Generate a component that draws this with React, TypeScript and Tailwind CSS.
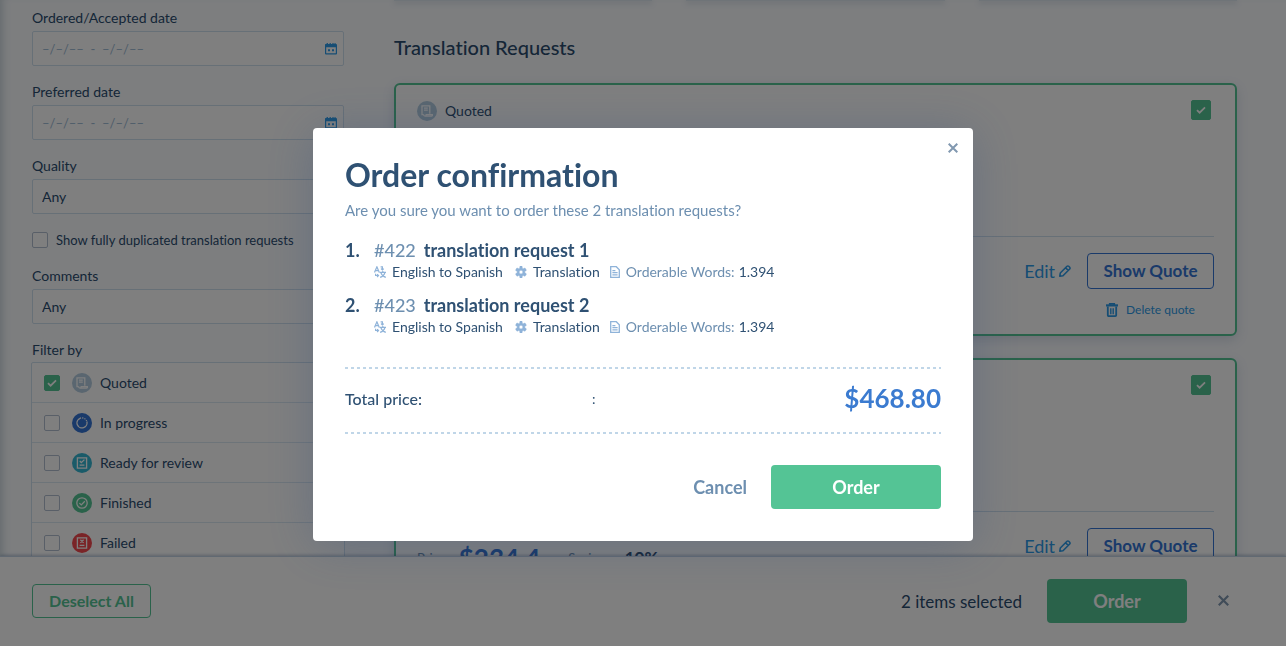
import { useState } from "react";
import type { ReactNode } from "react";

type IconProps = { className?: string };

const CheckIcon = ({ className }: IconProps) => (
  <svg viewBox="0 0 16 16" className={className} fill="none" stroke="currentColor" strokeWidth="2">
    <path d="M3.4 8.2l3 2.9L12.6 5" />
  </svg>
);

const CloseIcon = ({ className }: IconProps) => (
  <svg viewBox="0 0 10 10" className={className} fill="none" stroke="currentColor" strokeWidth="2">
    <path d="M0.7 0.7l8.6 8.6M9.3 0.7L0.7 9.3" />
  </svg>
);

const CalendarIcon = ({ className }: IconProps) => (
  <svg viewBox="0 0 12 12" className={className} fill="currentColor">
    <path
      fillRule="evenodd"
      d="M1.6 0h1.3v1h1.7V0h1.2v1h1.6V0h1.2v1h0.9V0h1.1v1H11a1 1 0 0 1 1 1v8.5a1 1 0 0 1-1 1H1a1 1 0 0 1-1-1V2a1 1 0 0 1 0.6-1h1V0zM1.2 4.2v6.1h9.6V4.2H1.2z"
    />
    <path d="M3 6.3h2v2H3zM7 6.3h2v2H7z" />
  </svg>
);

const PencilIcon = ({ className }: IconProps) => (
  <svg viewBox="0 0 12 12" className={className} fill="none" stroke="currentColor" strokeWidth="1.6" strokeLinejoin="round">
    <path d="M0.8 11.2l0.5-3.2 6.7-6.7a1.2 1.2 0 0 1 1.7 0l1 1a1.2 1.2 0 0 1 0 1.7L4 10.7l-3.2 0.5zM6.6 2.8l2.6 2.6" />
  </svg>
);

const TrashIcon = ({ className }: IconProps) => (
  <svg viewBox="0 0 12 14" className={className} fill="none" stroke="currentColor">
    <path strokeWidth="2.2" d="M0 2.4h12" />
    <path strokeWidth="1.8" d="M3.8 2V0.9h4.4V2M1.8 3.5v8.7a0.9 0.9 0 0 0 0.9 0.9h6.6a0.9 0.9 0 0 0 0.9-0.9V3.5" />
    <path strokeWidth="1.4" d="M4.8 5.2v6M7.2 5.2v6" />
  </svg>
);

const LanguageIcon = ({ className }: IconProps) => (
  <svg viewBox="0 0 12 12" className={className} fill="none" stroke="currentColor" strokeWidth="1.2">
    <path d="M0.5 6.4L2.9 0.8l2.4 5.6M1.4 4.6h3.2" />
    <path d="M6.6 0.9h1.8v2.8M7 2.6l1.4 1.4L9.8 2.6" />
    <path d="M1.6 7.8v1.7h2.6M3.1 8.1l1.4 1.4-1.4 1.5" />
    <path d="M5.6 6.3H12M8.8 4.9v1.4M10.9 6.5c-0.5 2.2-2.2 4-4.8 4.9M6.8 6.6c0.8 2.4 2.4 4 5 4.8" />
  </svg>
);

const GearIcon = ({ className }: IconProps) => (
  <svg viewBox="1 0.4 22 22.8" className={className} fill="currentColor" stroke="currentColor" strokeWidth="0.8">
    <path d="M19.14 12.94c.04-.3.06-.61.06-.94 0-.32-.02-.64-.07-.94l2.8-2.2a.6.6 0 0 0 .14-.7l-2.1-3.7a.6.6 0 0 0-.7-.2l-3.2 1.2c-.5-.4-1-.7-1.6-.94L14 .9a.6.6 0 0 0-.6-.5h-2.8a.6.6 0 0 0-.6.5l-.5 3.6c-.6.24-1.1.56-1.6.94L4.7 4.2a.6.6 0 0 0-.7.2L1.9 8.1a.6.6 0 0 0 .14.8l2.8 2.16c-.05.3-.09.63-.09.94s.02.64.07.94L2 15.1a.6.6 0 0 0-.14.8L4 19.6c.1.2.4.3.7.2l3.2-1.3c.5.4 1 .7 1.6.95l.5 3.6c.05.3.3.5.6.5h2.8c.3 0 .55-.2.6-.5l.5-3.6c.6-.24 1.1-.56 1.6-.94l3.2 1.3c.3.1.6 0 .7-.2l2.1-3.7a.6.6 0 0 0-.14-.8l-2.82-2.17zM12 15.4a3.5 3.5 0 1 1 0-7 3.5 3.5 0 0 1 0 7z" />
  </svg>
);

const FileIcon = ({ className }: IconProps) => (
  <svg viewBox="0 0 10 12" className={className} fill="none" stroke="currentColor" strokeWidth="1.3">
    <path d="M0.7 0.7h5.6l3 3v7.6H0.7zM2.4 4.6h3M2.4 6.7h5.2M2.4 8.8h5.2" />
  </svg>
);

const QuotedIcon = () => (
  <svg viewBox="0 0 12 12" className="size-3" fill="none" stroke="currentColor" strokeWidth="1.3">
    <path d="M2.6 9.6H1V0.8h7.8v8M3 3.2h3.8M3 5.2h3.8M2.6 9.6c0 1 0.6 1.5 1.4 1.5h6.4c0.7 0 1.1-0.6 1.1-1.5H5.2c0 0.9-0.4 1.5-1.2 1.5" />
  </svg>
);

const ProgressIcon = () => (
  <svg viewBox="0 0 12 12" className="size-3" fill="none" stroke="currentColor" strokeWidth="1.3">
    <path d="M4 1.3a5 5 0 1 0 6.8 3.2" />
    <path strokeDasharray="1.2 1" d="M4 1.3a5 5 0 0 1 6.8 3.2" />
  </svg>
);

const ReviewIcon = () => (
  <svg viewBox="0 0 12 12" className="size-3" fill="none" stroke="currentColor" strokeWidth="1.3">
    <path d="M1.4 0.8h9.2v10.4H1.4zM3.8 4l1.5 1.6L8.4 2.6M3.6 8.2h4.8" />
  </svg>
);

const FinishedIcon = () => (
  <svg viewBox="0 0 12 12" className="size-3" fill="none" stroke="currentColor" strokeWidth="1.3">
    <circle cx="6" cy="6" r="5.2" />
    <path d="M3.4 6.1l1.9 1.8 3.5-3.6" />
  </svg>
);

const FailedIcon = () => (
  <svg viewBox="0 0 12 12" className="size-3" fill="none" stroke="currentColor" strokeWidth="1.3">
    <path d="M1.4 0.8h9.2v10.4H1.4zM4.4 2.8l3.2 3M7.6 2.8l-3.2 3M3.6 8.4h4.8" />
  </svg>
);

const filters = [
  { name: "Quoted", color: "bg-[#b4cde0]", icon: <QuotedIcon />, checked: true },
  { name: "In progress", color: "bg-[#3474d4]", icon: <ProgressIcon />, checked: false },
  { name: "Ready for review", color: "bg-[#35b7d3]", icon: <ReviewIcon />, checked: false },
  { name: "Finished", color: "bg-[#54c495]", icon: <FinishedIcon />, checked: false },
  { name: "Failed", color: "bg-[#f5494f]", icon: <FailedIcon />, checked: false },
];

const orderItems = [
  { id: "#422", name: "translation request 1", words: "1.394" },
  { id: "#423", name: "translation request 2", words: "1.394" },
];

const Checkbox = ({ label, defaultChecked, large }: { label: string; defaultChecked?: boolean; large?: boolean }) => (
  <span className={`relative inline-flex shrink-0 ${large ? "size-5" : "size-4"}`}>
    <input
      type="checkbox"
      aria-label={label}
      defaultChecked={defaultChecked}
      className="peer size-full appearance-none rounded-xs border border-[#b3bfd0] bg-white checked:border-[#54c495] checked:bg-[#54c495]"
    />
    <CheckIcon className="pointer-events-none absolute inset-0 m-auto hidden size-3.5 text-white peer-checked:block" />
  </span>
);

const DateField = ({ id, label }: { id: string; label: string }) => (
  <div>
    <label htmlFor={id} className="block h-[26px] leading-[26px]">
      {label}
    </label>
    <div className="mb-[13px] flex h-[35px] items-center rounded-xs border border-[#cfe0ef] bg-white pr-1.5 pl-[9px]">
      <input
        id={id}
        type="text"
        placeholder="–/–/––  -  –/–/––"
        className="min-w-0 flex-1 bg-transparent pt-0.5 text-[13px] whitespace-pre outline-none placeholder:text-[#9dbad4]"
      />
      <CalendarIcon className="size-3 text-[#2d9be8]" />
    </div>
  </div>
);

const SelectField = ({ id, label }: { id: string; label: string }) => (
  <div>
    <label htmlFor={id} className="block h-[26px] leading-[26px]">
      {label}
    </label>
    <select
      id={id}
      className="mb-[13px] block h-[35px] w-full appearance-none rounded-xs border border-[#cfe0ef] bg-white px-[9px]"
    >
      <option>Any</option>
    </select>
  </div>
);

const StatusBadge = ({ color, children }: { color: string; children: ReactNode }) => (
  <span className={`flex size-5 items-center justify-center rounded-full text-white ${color}`}>{children}</span>
);

const RequestCard = ({ name }: { name: string }) => (
  <article className="mb-[22px] h-[253px] rounded-md border-2 border-[#54c495] bg-white px-[21px] shadow-[0_4px_12px_rgba(80,110,150,0.2)]">
    <div className="flex h-[152px] items-start justify-between border-b border-[#cfe0ef] pt-[15px] pr-[3px]">
      <div className="flex h-[22px] items-center gap-2">
        <StatusBadge color="bg-[#b4cde0]">
          <QuotedIcon />
        </StatusBadge>
        <span>Quoted</span>
      </div>
      <Checkbox label={`Select ${name}`} defaultChecked large />
    </div>
    <div className="flex items-start justify-between pt-4">
      <div className="flex items-center gap-7 pt-3.5">
        <p className="flex items-center gap-2.5 text-[13px] text-[#6d8fb0]">
          Price: <strong className="text-[26px] leading-8 text-[#3474d4]">$234.4</strong>
        </p>
        <p className="flex items-center gap-4 text-[13px] text-[#6d8fb0]">
          Saving: <strong className="text-[17px] text-[#2b4c6f]">10%</strong>
        </p>
      </div>
      <div className="flex gap-4">
        <a href="#edit" className="flex h-9 items-center gap-1 text-lg text-[#2d9be8]">
          Edit <PencilIcon className="size-3" />
        </a>
        <div className="flex flex-col items-center gap-[11px]">
          <button className="h-9 w-[127px] rounded-sm border border-[#3474d4] text-[17px] font-bold text-[#3474d4]">
            Show Quote
          </button>
          <button className="flex items-center gap-2 text-xs leading-5 text-[#2d9be8]">
            <TrashIcon className="h-3.5 w-3" />
            Delete quote
          </button>
        </div>
      </div>
    </div>
  </article>
);

const DashedLine = () => (
  <div className="h-0.5 bg-[repeating-linear-gradient(90deg,#c0d6e8_0_3px,transparent_3px_6px)]" />
);

const OrderDialog = ({ onClose }: { onClose: () => void }) => (
  <div className="fixed inset-0 z-20 flex items-start justify-center bg-black/50 pt-32">
    <section
      role="dialog"
      aria-labelledby="order-title"
      className="relative w-[660px] rounded-sm bg-white p-8 shadow-[0_4px_48px_rgba(45,75,125,0.3)]"
    >
      <button aria-label="Close" onClick={onClose} className="absolute top-[15px] right-[15px] text-[#8198b0]">
        <CloseIcon className="size-2.5" />
      </button>
      <h1 id="order-title" className="text-[32px] leading-[30px] font-bold text-[#2f5173]">
        Order confirmation
      </h1>
      <p className="mt-2 text-[15px] leading-6 text-[#6d8fb0]">
        Are you sure you want to order these 2 translation requests?
      </p>
      <ol className="mt-4 mb-[30px]">
        {orderItems.map((item, index) => (
          <li key={item.id} className="mb-[11px] flex text-[#2f5173]">
            <span className="w-[29px] text-lg leading-6 font-bold">{index + 1}.</span>
            <div>
              <p className="flex gap-2 text-lg leading-6 font-bold">
                <span className="font-medium text-[#6d8fb0]">{item.id}</span>
                {item.name}
              </p>
              <p className="flex items-center leading-5">
                <LanguageIcon className="mr-1.5 size-3 text-[#8fb3d9]" />
                <span className="mr-3">English to Spanish</span>
                <GearIcon className="mr-1.5 size-3 text-[#8fb3d9]" />
                <span className="mr-2.5">Translation</span>
                <FileIcon className="mr-1.5 h-3 w-2.5 text-[#8fb3d9]" />
                <span className="mr-1 text-[#6d8fb0]">Orderable Words:</span>
                {item.words}
              </p>
            </div>
          </li>
        ))}
      </ol>
      <DashedLine />
      <div className="flex h-[63px] items-center pb-1 text-base text-[#2f5173]">
        <span className="w-[247px] font-medium">Total price:</span>
        <span className="text-sm">:</span>
        <strong className="ml-auto text-[26px] text-[#3b7bd0]">$468.80</strong>
      </div>
      <DashedLine />
      <div className="mt-[31px] flex justify-end gap-6 text-lg font-bold">
        <button onClick={onClose} className="text-[#6d8fb0]">
          Cancel
        </button>
        <button className="h-11 w-[170px] rounded-sm bg-[#54c495] text-white">Order</button>
      </div>
    </section>
  </div>
);

const App = () => {
  const [isOpen, setIsOpen] = useState(true);

  return (
    <div className="flex h-screen flex-col overflow-hidden bg-[#fafcff] font-['Lato',sans-serif] text-sm text-[#2b4c6f] [font-variant-ligatures:none]">
      <div className="flex min-h-0 flex-1 overflow-hidden shadow-[inset_8px_0_8px_-6px_rgba(80,120,130,0.3)]">
        {/* Filters */}
        <aside className="ml-8 w-[312px] shrink-0 pt-[5px]">
          <DateField id="ordered" label="Ordered/Accepted date" />
          <DateField id="preferred" label="Preferred date" />
          <SelectField id="quality" label="Quality" />
          <label className="mb-2.5 flex h-[26px] items-center gap-2 text-[13px]">
            <Checkbox label="Show fully duplicated translation requests" />
            Show fully duplicated translation requests
          </label>
          <SelectField id="comments" label="Comments" />
          <h2 className="h-[25px] leading-[26px]">Filter by</h2>
          <ul className="-mx-px rounded-xs border border-[#cfe0ef] bg-white">
            {filters.map((filter) => (
              <li key={filter.name} className="border-b border-[#dbe8f3]">
                <label className="flex h-[39px] items-center pl-3">
                  <Checkbox label={filter.name} defaultChecked={filter.checked} />
                  <span className="mr-2 ml-3">
                    <StatusBadge color={filter.color}>{filter.icon}</StatusBadge>
                  </span>
                  {filter.name}
                </label>
              </li>
            ))}
          </ul>
        </aside>

        {/* Requests */}
        <main className="mr-[49px] ml-[50px] min-w-0 flex-1">
          <div className="grid grid-cols-3 gap-[34px]">
            <div className="h-px bg-[#dfe9f0] shadow-[0_2px_5px_rgba(70,110,140,0.5)]" />
            <div className="h-px bg-[#dfe9f0] shadow-[0_2px_5px_rgba(70,110,140,0.5)]" />
            <div className="h-px bg-[#dfe9f0] shadow-[0_2px_5px_rgba(70,110,140,0.5)]" />
          </div>
          <h2 className="mt-8 mb-[22px] text-xl font-medium">Translation Requests</h2>
          <RequestCard name="translation request 1" />
          <RequestCard name="translation request 2" />
        </main>
      </div>

      {/* Selection bar */}
      <footer className="z-10 flex h-[90px] shrink-0 items-center border-t border-[#c3d3e4] bg-white px-8 pb-0.5 shadow-[0_-1px_3px_rgba(80,110,150,0.4)]">
        <button className="h-[34px] w-[119px] rounded-sm border border-[#54c495] text-base font-bold text-[#54c495]">
          Deselect All
        </button>
        <span className="mr-[25px] ml-auto pt-1 text-[17px]">2 items selected</span>
        <button className="h-11 w-[140px] rounded-sm bg-[#54c495] text-lg font-bold text-white">Order</button>
        <button aria-label="Clear selection" className="mr-[25px] ml-[31px] text-[#8198b0]">
          <CloseIcon className="size-[11px]" />
        </button>
      </footer>

      {isOpen && <OrderDialog onClose={() => setIsOpen(false)} />}
    </div>
  );
};

export default App;
